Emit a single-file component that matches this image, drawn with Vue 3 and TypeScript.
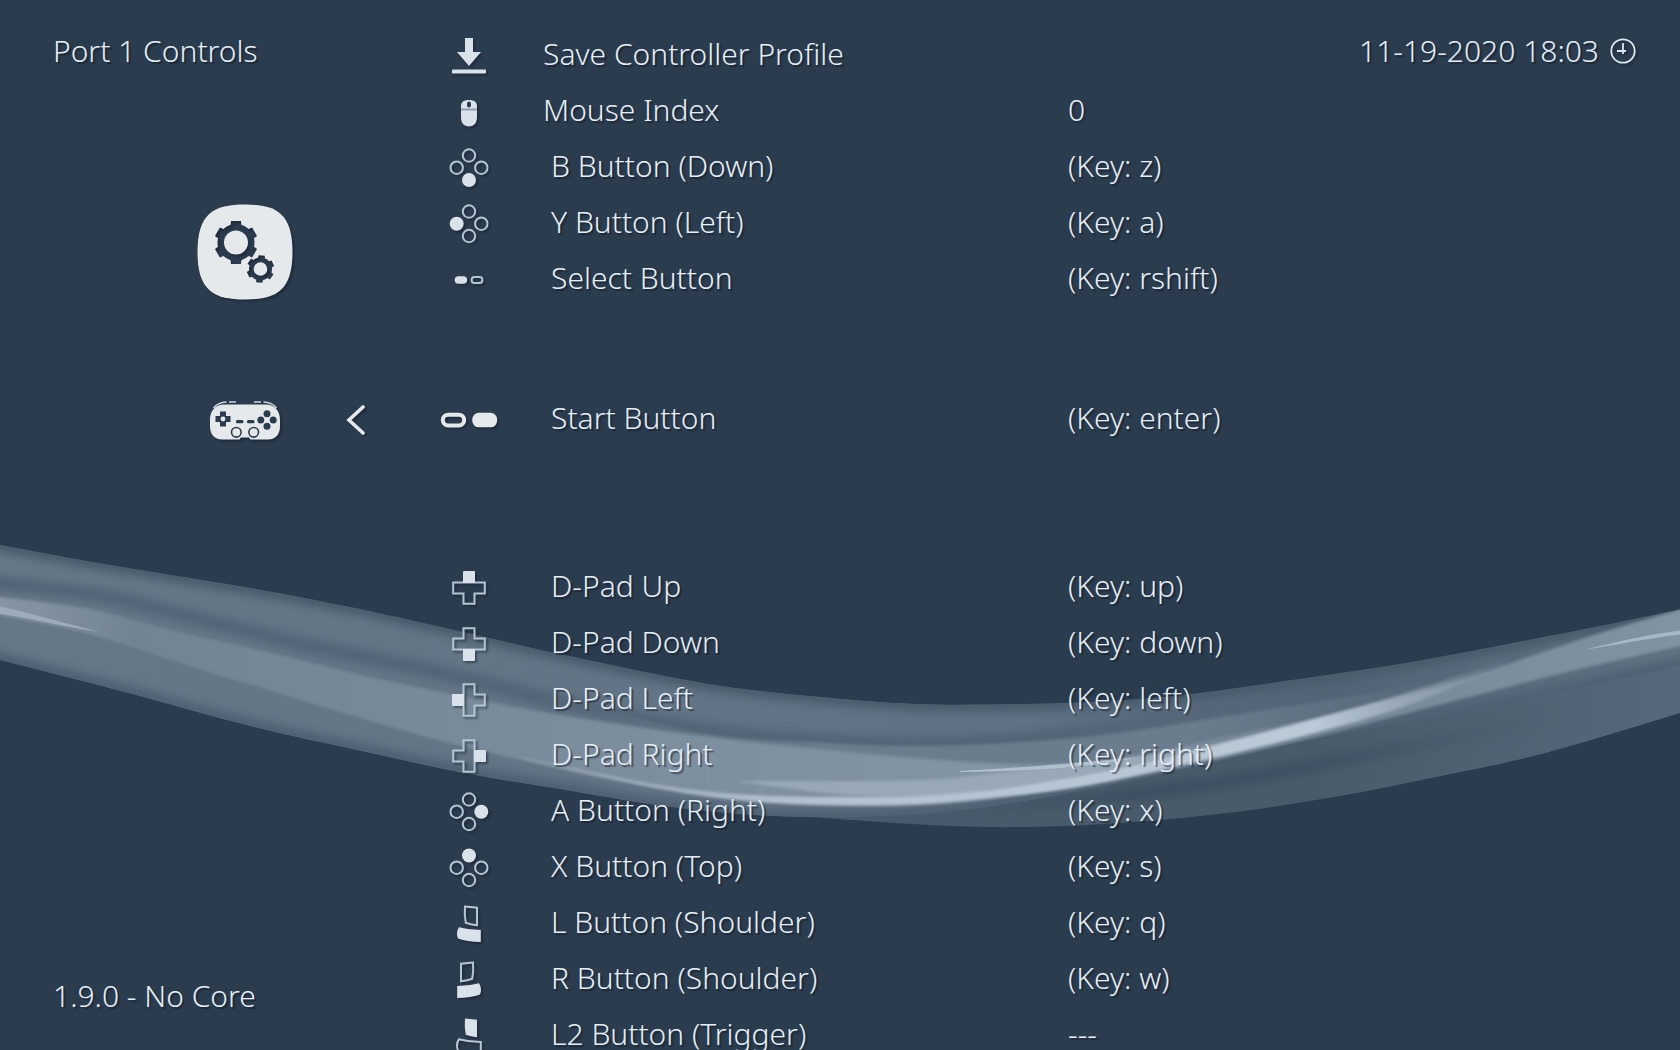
<script setup lang="ts">
type IconKind = 'save' | 'mouse' | 'face' | 'pills' | 'dpad' | 'shoulder'

interface Entry {
  label: string
  value: string
  icon: IconKind
  part?: string
  indent?: boolean
  active?: boolean
}

const entries: Entry[] = [
  { label: 'Save Controller Profile', value: '', icon: 'save' },
  { label: 'Mouse Index', value: '0', icon: 'mouse' },
  { label: 'B Button (Down)', value: '(Key: z)', icon: 'face', part: 'down', indent: true },
  { label: 'Y Button (Left)', value: '(Key: a)', icon: 'face', part: 'left', indent: true },
  { label: 'Select Button', value: '(Key: rshift)', icon: 'pills', part: 'select', indent: true },
  { label: 'Start Button', value: '(Key: enter)', icon: 'pills', part: 'start', indent: true, active: true },
  { label: 'D-Pad Up', value: '(Key: up)', icon: 'dpad', part: 'up', indent: true },
  { label: 'D-Pad Down', value: '(Key: down)', icon: 'dpad', part: 'down', indent: true },
  { label: 'D-Pad Left', value: '(Key: left)', icon: 'dpad', part: 'left', indent: true },
  { label: 'D-Pad Right', value: '(Key: right)', icon: 'dpad', part: 'right', indent: true },
  { label: 'A Button (Right)', value: '(Key: x)', icon: 'face', part: 'right', indent: true },
  { label: 'X Button (Top)', value: '(Key: s)', icon: 'face', part: 'up', indent: true },
  { label: 'L Button (Shoulder)', value: '(Key: q)', icon: 'shoulder', part: 'l', indent: true },
  { label: 'R Button (Shoulder)', value: '(Key: w)', icon: 'shoulder', part: 'r', indent: true },
  { label: 'L2 Button (Trigger)', value: '---', icon: 'shoulder', part: 'l2', indent: true },
]

const faceButtons = [
  { part: 'up', x: 0, y: -11.5 },
  { part: 'left', x: -12.3, y: 0.7 },
  { part: 'right', x: 12.3, y: 0.7 },
  { part: 'down', x: 0, y: 13 },
]

const turns: Record<string, number> = { up: 0, right: 90, down: 180, left: 270 }

type Point = [number, number]

// Smooth curve through the points (Catmull-Rom converted to cubic Béziers)
function curve(points: Point[], start = 'M'): string {
  let d = `${start}${points[0][0]} ${points[0][1]}`
  for (let i = 0; i < points.length - 1; i++) {
    const p0 = points[i - 1] ?? points[i]
    const p1 = points[i]
    const p2 = points[i + 1]
    const p3 = points[i + 2] ?? p2
    d += `C${p1[0] + (p2[0] - p0[0]) / 6} ${p1[1] + (p2[1] - p0[1]) / 6} ${p2[0] - (p3[0] - p1[0]) / 6} ${p2[1] - (p3[1] - p1[1]) / 6} ${p2[0]} ${p2[1]}`
  }
  return d
}

function ribbon(top: Point[], bottom: Point[]): string {
  return curve(top) + curve([...bottom].reverse(), 'L') + 'Z'
}

function gear(cx: number, cy: number, tip: number, body: number, hole: number, turn: number): string {
  const at = (r: number, deg: number) => {
    const a = ((deg + turn) * Math.PI) / 180
    return `${(cx + r * Math.sin(a)).toFixed(2)} ${(cy - r * Math.cos(a)).toFixed(2)}`
  }
  let d = ''
  for (let k = 0; k < 6; k++) {
    const c = k * 60
    d += `${k ? 'L' : 'M'}${at(body, c - 17)}L${at(tip, c - 13)}L${at(tip, c + 13)}L${at(body, c + 17)}`
    d += `A${body} ${body} 0 0 1 ${at(body, c + 43)}`
  }
  d += `Z M${cx - hole} ${cy}a${hole} ${hole} 0 1 0 ${hole * 2} 0a${hole} ${hole} 0 1 0 ${-hole * 2} 0Z`
  return d
}

const topEdge: Point[] = [[-20, 542], [0, 545], [98, 563], [250, 588], [350, 607], [450, 629], [560, 654], [703, 683], [810, 696], [917, 704], [1024, 704], [1110, 701], [1191, 694], [1299, 679], [1406, 663], [1513, 643], [1620, 622], [1700, 605]]
const lowEdge: Point[] = [[-20, 655], [0, 660], [121, 691], [250, 726], [357, 750], [464, 773], [560, 789], [649, 804], [739, 814], [810, 817], [881, 816], [953, 811], [1024, 801], [1120, 783], [1227, 759], [1334, 735], [1477, 709], [1584, 687], [1700, 661]]
const outerTop: Point[] = [[740, 812], [810, 812], [881, 811], [953, 806], [1024, 797], [1120, 779], [1227, 756], [1334, 731], [1477, 704], [1584, 683], [1700, 656]]
const outerLow: Point[] = [[740, 813], [810, 817], [881, 822], [953, 826], [1024, 827], [1120, 823], [1227, 813], [1334, 797], [1441, 776], [1549, 752], [1700, 707]]
const innerTop: Point[] = [[-20, 594], [0, 597], [89, 609], [179, 632], [268, 652], [357, 674], [446, 693], [560, 715], [703, 736], [810, 748], [917, 758], [1024, 764], [1120, 758], [1227, 736], [1334, 714], [1441, 686], [1549, 650], [1620, 627], [1700, 604]]
const innerLow: Point[] = [[-20, 610], [0, 615], [89, 634], [179, 663], [268, 690], [357, 717], [446, 742], [560, 769], [631, 783], [703, 794], [774, 802], [846, 806], [917, 805], [989, 799], [1120, 779], [1191, 765], [1299, 741], [1370, 723], [1477, 695], [1584, 668], [1700, 642]]
const midTop: Point[] = [[560, 696], [703, 733], [810, 742], [917, 746], [1024, 742], [1120, 733], [1227, 716], [1334, 699], [1406, 686], [1460, 676]]
const midLow: Point[] = [[560, 715], [703, 738], [810, 750], [917, 760], [1024, 768], [1120, 762], [1227, 740], [1334, 718], [1406, 697], [1460, 679]]
const darkLine: Point[] = [[-20, 579], [0, 583], [107, 597], [214, 623], [321, 648], [446, 674], [560, 702], [703, 730], [810, 740], [917, 744], [1024, 739], [1120, 727], [1227, 708], [1334, 690]]
const glowTop: Point[] = [[520, 757], [631, 780], [703, 791], [774, 796], [846, 797], [917, 796], [989, 790], [1060, 779], [1120, 768], [1191, 751], [1299, 723], [1406, 693], [1513, 657]]
const glowLow: Point[] = [[520, 758], [631, 783], [703, 796], [774, 803], [846, 805], [917, 804], [989, 798], [1060, 790], [1120, 779], [1191, 763], [1299, 737], [1406, 706], [1513, 661]]
const sheenTop: Point[] = [[740, 781], [850, 781], [940, 779], [1024, 770], [1100, 762], [1191, 748]]
const sheenLow: Point[] = [[740, 782], [850, 795], [940, 796], [1024, 785], [1100, 772], [1191, 752]]
const outerShade: Point[] = [[960, 810], [1120, 796], [1227, 781], [1299, 768], [1441, 740], [1560, 714]]

const gears = gear(39, 38.5, 22, 18.5, 12, 0) + gear(63.5, 65, 14, 11.5, 6.8, 5)
</script>

<template>
  <main class="screen">
    <svg class="backdrop" viewBox="0 0 1680 1050" preserveAspectRatio="none" aria-hidden="true">
      <defs>
        <linearGradient id="inner" x1="0" x2="1680" y1="0" y2="0" gradientUnits="userSpaceOnUse">
          <stop offset="0" stop-color="#8796a5" />
          <stop offset="0.08" stop-color="#728394" />
          <stop offset="0.35" stop-color="#7b8c9c" />
          <stop offset="0.6" stop-color="#8394a4" />
          <stop offset="0.75" stop-color="#748596" />
          <stop offset="1" stop-color="#8192a2" />
        </linearGradient>
        <linearGradient id="glow" x1="520" x2="1513" y1="0" y2="0" gradientUnits="userSpaceOnUse">
          <stop offset="0" stop-color="#b4c2d0" stop-opacity="0.5" />
          <stop offset="0.3" stop-color="#b4c2d0" />
          <stop offset="0.8" stop-color="#bccad8" />
          <stop offset="1" stop-color="#a3b2c2" stop-opacity="0" />
        </linearGradient>
        <linearGradient id="upper" x1="0" x2="1680" y1="0" y2="0" gradientUnits="userSpaceOnUse">
          <stop offset="0" stop-color="#667788" />
          <stop offset="0.6" stop-color="#617284" />
          <stop offset="0.8" stop-color="#526475" />
          <stop offset="1" stop-color="#617283" />
        </linearGradient>
        <linearGradient id="outer" x1="740" x2="1680" y1="0" y2="0" gradientUnits="userSpaceOnUse">
          <stop offset="0" stop-color="#485a6b" />
          <stop offset="0.6" stop-color="#495b6b" />
          <stop offset="1" stop-color="#566879" />
        </linearGradient>
        <linearGradient id="shade" x1="960" x2="1560" y1="0" y2="0" gradientUnits="userSpaceOnUse">
          <stop offset="0" stop-color="#3d4f60" stop-opacity="0" />
          <stop offset="0.3" stop-color="#3d4f60" />
          <stop offset="0.6" stop-color="#3f5162" />
          <stop offset="1" stop-color="#4a5c6d" stop-opacity="0" />
        </linearGradient>
        <linearGradient id="crease" x1="0" x2="1334" y1="0" y2="0" gradientUnits="userSpaceOnUse">
          <stop offset="0" stop-color="#526475" />
          <stop offset="0.8" stop-color="#526475" />
          <stop offset="1" stop-color="#526475" stop-opacity="0" />
        </linearGradient>
        <linearGradient id="mid" x1="560" x2="1460" y1="0" y2="0" gradientUnits="userSpaceOnUse">
          <stop offset="0" stop-color="#6b7c8d" stop-opacity="0" />
          <stop offset="0.3" stop-color="#6b7c8d" />
          <stop offset="0.7" stop-color="#6b7c8d" />
          <stop offset="1" stop-color="#6b7c8d" stop-opacity="0" />
        </linearGradient>
        <filter id="soft" color-interpolation-filters="sRGB"><feGaussianBlur stdDeviation="4" /></filter>
        <filter id="smooth" color-interpolation-filters="sRGB" x="-5%" width="110%" y="-20%" height="140%"><feGaussianBlur stdDeviation="1.5" /></filter>
        <clipPath id="band"><path :d="ribbon(topEdge, lowEdge)" /></clipPath>
      </defs>
      <path :d="ribbon(outerTop, outerLow)" fill="url(#outer)" />
      <path :d="curve(outerShade)" fill="none" stroke="url(#shade)" stroke-width="14" filter="url(#soft)" />
      <g clip-path="url(#band)">
        <path :d="ribbon(topEdge, lowEdge)" fill="url(#upper)" />
        <path :d="curve(topEdge)" fill="none" stroke="#4a5b6c" stroke-width="14" filter="url(#soft)" />
        <path :d="curve(lowEdge)" fill="none" stroke="#4f6172" stroke-width="16" filter="url(#soft)" />
        <path :d="curve(darkLine)" fill="none" stroke="url(#crease)" stroke-width="14" filter="url(#soft)" />
        <path :d="ribbon(midTop, midLow)" fill="url(#mid)" filter="url(#smooth)" />
        <path :d="ribbon(innerTop, innerLow)" fill="url(#inner)" filter="url(#smooth)" />
        <path :d="ribbon(sheenTop, sheenLow)" fill="#98a8b6" filter="url(#smooth)" />
      </g>
      <path :d="ribbon(glowTop, glowLow)" fill="url(#glow)" filter="url(#smooth)" />
      <path d="M-5 605C30 613 65 623 100 632C65 627 30 618-5 613Z" fill="#9dacbb" />
      <path d="M960 771C1030 767 1090 762 1140 757C1090 768 1030 771 960 772Z" fill="#b0bfcd" />
      <path d="M1584 650C1620 641 1650 634 1684 630V634C1650 638 1620 644 1584 650Z" fill="#a9b8c6" />
    </svg>

    <section class="side">
      <h1 class="title">Port 1 Controls</h1>
      <nav class="tabs">
        <button class="tab" type="button" aria-label="Settings">
          <svg width="96" height="96" viewBox="0 0 96 96">
            <mask id="gear-mask">
              <rect width="96" height="96" fill="#fff" />
              <path :d="gears" fill="#000" fill-rule="evenodd" />
            </mask>
            <path mask="url(#gear-mask)" d="M48 .5C80 .5 95.5 10 95.500 48C95.500 86 80 95.500 48 95.500C16 95.500.5 86 .5 48C.5 10 16 .5 48 .5Z" fill="#e6e9eb" />
          </svg>
        </button>
        <div class="current">
          <button class="tab" type="button" aria-label="Controls">
            <svg width="72" height="56" viewBox="0 0 72 56" fill="none">
              <path d="M15 13.500H57C66 13.500 71 20 71 29V35C71 43 67 48.500 59 48.500H41.500L40 46.500H32L30.500 48.500H13C5 48.500 1 43 1 35V29C1 20 6 13.500 15 13.500Z" fill="#e6e9eb" />
              <path d="M4.500 17Q9 11.300 17.500 11M20 11H27M45 11H52M54.500 11Q63 11.300 67.500 17" stroke="#c9d4dd" stroke-width="1.600" />
              <path d="M11 20.500H17V25H21.500V31H17V35.500H11V31H6.500V25H11Z" fill="#2c3c4f" />
              <circle cx="14" cy="28" r="2.400" fill="#e6e9eb" />
              <path d="M28.500 30.700H33M39.500 30.700H44" stroke="#2c3c4f" stroke-width="3.200" stroke-linecap="round" />
              <g fill="#2c3c4f">
                <circle cx="58" cy="22.700" r="3.500" /><circle cx="58" cy="35.300" r="3.500" />
                <circle cx="51.800" cy="29" r="3.500" /><circle cx="64.200" cy="29" r="3.500" />
              </g>
              <g stroke="#2c3c4f" stroke-width="1.600">
                <circle cx="27.300" cy="41.300" r="4.800" /><circle cx="44.700" cy="41.300" r="4.800" />
              </g>
            </svg>
          </button>
          <svg class="arrow" width="20" height="32" viewBox="0 0 20 32" fill="none" aria-hidden="true">
            <path d="M17 4L3 17L17 30" stroke="#e6e9eb" stroke-width="3.600" stroke-linecap="round" />
          </svg>
        </div>
      </nav>
      <p class="version">1.9.0 - No Core</p>
    </section>

    <ul class="list">
      <li v-for="entry in entries" :key="entry.label" :class="{ active: entry.active }">
        <button class="row" type="button">
          <svg class="icon" width="64" height="56" viewBox="-32 -28 64 56" aria-hidden="true">
            <g v-if="entry.icon === 'save'" class="solid">
              <path d="M-4-17H4V-3H12L0 11L-12-3H-4Z" /><rect x="-17" y="14.500" width="34" height="4" rx="1" />
            </g>
            <template v-else-if="entry.icon === 'mouse'">
              <path class="solid" d="M-8-2V-5C-8-9-5-11 0-11S8-9 8-5V-2ZM-8-1H8V6C8 12 5 15.500 0 15.500S-8 12-8 6Z" />
              <rect x="-8" y="-2.500" width="16" height="2" fill="#8d9dab" />
              <rect x="-2" y="-9.500" width="4" height="6" rx="2" fill="#2c3c4f" />
            </template>
            <template v-else-if="entry.icon === 'face'">
              <circle
                v-for="b in faceButtons" :key="b.part" :cx="b.x" :cy="b.y"
                :r="b.part === entry.part ? 7 : 6.2" :class="b.part === entry.part ? 'solid' : 'line'"
              />
            </template>
            <template v-else-if="entry.part === 'select'">
              <rect class="solid" x="-14.300" y="-2.700" width="12.400" height="7.400" rx="3.600" />
              <rect class="line" x="2.600" y="-1.900" width="10.800" height="5.800" rx="2.900" />
            </template>
            <template v-else-if="entry.part === 'start'">
              <rect class="line" x="-26.200" y="-4.300" width="21.400" height="10.800" rx="5.400" />
              <rect class="solid" x="3.300" y="-6.200" width="24.800" height="14.500" rx="6.500" />
            </template>
            <g v-else-if="entry.icon === 'dpad'" :transform="`translate(0 1) rotate(${turns[entry.part ?? 'up']})`">
              <path class="line" d="M-15.800-5.500H15.800V5.500H5.500V15.800H-5.500V5.500H-15.800Z" />
              <rect class="solid" x="-6" y="-17" width="12" height="12" rx="1" />
            </g>
            <g v-else :transform="entry.part === 'r' ? 'scale(-1 1)' : undefined">
              <path :class="entry.part === 'l2' ? 'solid' : 'line'" d="M-4-16.500L8-15.300V2.300Q1 1.500-3.200-.2Q-4.800-8-4-16.500Z" />
              <path :class="entry.part === 'l2' ? 'line' : 'solid'" d="M-10 4.200Q0 7 11.800 7V19Q-2 18.600-11 15.500Q-13.500 9-10 4.200Z" />
            </g>
          </svg>
          <span class="label" :class="{ indent: entry.indent }">{{ entry.label }}</span>
          <span class="value">{{ entry.value }}</span>
        </button>
      </li>
    </ul>

    <div class="clock">
      <time datetime="2020-11-19T18:03">11-19-2020 18:03</time>
      <svg width="28" height="28" viewBox="0 0 28 28" fill="none" stroke="#dce7ef" aria-hidden="true">
        <circle cx="14" cy="14" r="11.700" stroke-width="1.800" />
        <path d="M14 6V17M8 14H17" stroke-width="1.800" />
      </svg>
    </div>
  </main>
</template>

<style>
body {
  margin: 0;
  background: #2c3c4f;
}
</style>

<style scoped>
.screen {
  position: relative;
  display: grid;
  grid-template-columns: 400px 1fr auto;
  height: 100vh;
  overflow: hidden;
  background: #2c3c4f;
  color: #e4eef6;
  font: 300 30px/48px "Noto Sans", "Open Sans", sans-serif;
  text-shadow: 2px 2px 1px rgba(16, 26, 38, 0.55);
}

.backdrop {
  position: absolute;
  inset: 0;
  width: 100%;
  height: 100%;
}

.side,
.list,
.clock {
  position: relative;
  min-width: 0;
}

.side {
  display: flex;
  flex-direction: column;
  height: 100vh;
}

.title,
.version {
  margin: 0;
  padding-left: 53px;
  font: inherit;
}

.title {
  padding-top: 27px;
}

.version {
  margin-top: auto;
  padding-bottom: 30px;
}

.tabs {
  display: flex;
  flex-direction: column;
  align-items: flex-start;
  gap: 91px;
  padding: 129px 0 0 197px;
}

.current {
  display: flex;
  align-items: center;
}

.tab,
.row {
  padding: 0;
  border: 0;
  background: none;
  color: inherit;
  font: inherit;
  text-align: left;
  text-shadow: inherit;
  cursor: pointer;
}

.tab {
  display: flex;
  justify-content: center;
  width: 96px;
}

.arrow {
  margin-left: 53px;
}

.tab svg,
.arrow,
.icon,
.clock svg {
  filter: drop-shadow(2px 2px 1px rgba(16, 26, 38, 0.5));
}

.list {
  margin: 0;
  padding: 27px 0 0;
  list-style: none;
}

.active {
  margin: 84px 0 112px;
}

.row {
  display: grid;
  grid-template-columns: 137px 531px 1fr;
  align-items: center;
  width: 100%;
  height: 56px;
  white-space: nowrap;
}

.icon {
  justify-self: center;
}

.label,
.value {
  padding-bottom: 2px;
}

.label {
  padding-left: 6px;
}

.indent {
  padding-left: 14px;
}

.solid {
  fill: #d9e2ea;
}

.line {
  fill: none;
  stroke: #b4c5d4;
  stroke-width: 2px;
}

.active .solid {
  fill: #e6e9eb;
}

.active .line {
  stroke: #e6e9eb;
  stroke-width: 4px;
}

.clock {
  display: flex;
  gap: 10px;
  align-items: center;
  height: 48px;
  padding: 27px 43px 0 0;
}
</style>
